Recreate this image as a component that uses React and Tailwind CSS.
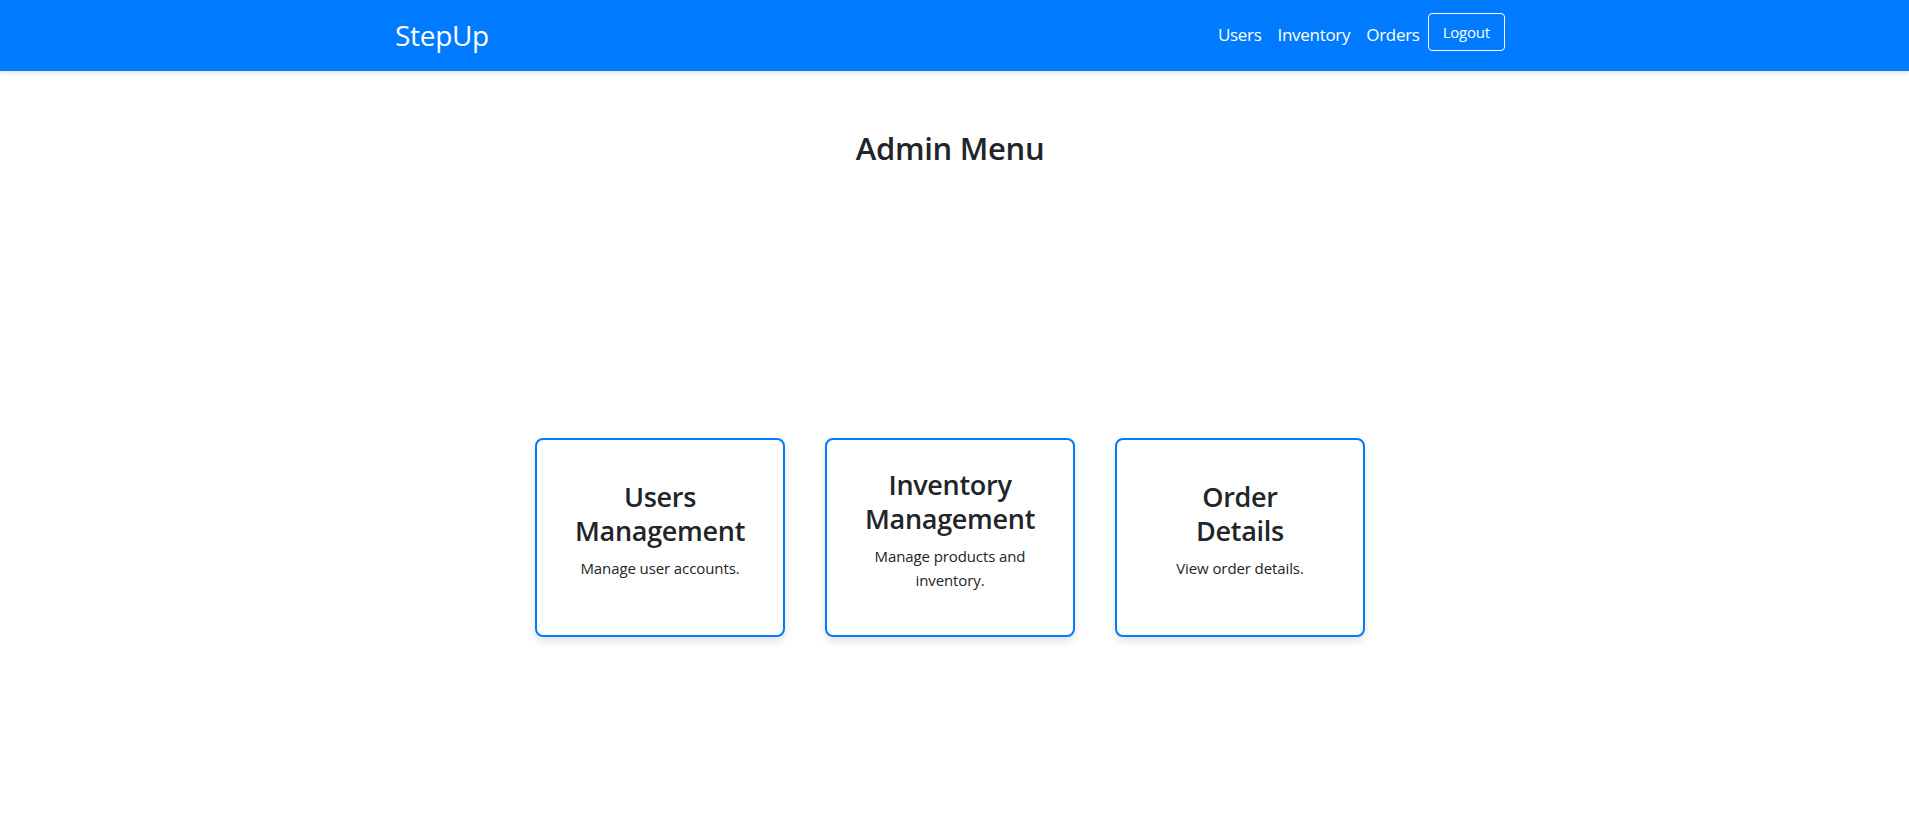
import React from "react";

const cards = [
  { title: ["Users", "Management"], desc: ["Manage user accounts."] },
  { title: ["Inventory", "Management"], desc: ["Manage products and", "inventory."] },
  { title: ["Order", "Details"], desc: ["View order details."] },
];

export default function App() {
  return (
    <div className="min-h-screen bg-white text-[#212529]" style={{ fontFamily: '"Open Sans", "Noto Sans", sans-serif' }}>
      <nav className="w-full bg-[#007bff] shadow-[0_2px_4px_rgba(0,0,0,0.12)]">
        <div className="w-[1900px] h-[71px]">
          <div className="mx-auto w-[1140px] h-full px-[15px] flex items-center justify-between">
            <a className="text-white text-[28px] leading-[36px] tracking-[-0.3px] -mt-[1px]">StepUp</a>
            <div className="flex items-center -mt-[3px]">
              <a className="text-white text-[17px] leading-[26px] px-2 mt-[2px] tracking-[-0.3px]">Users</a>
              <a className="text-white text-[17px] leading-[26px] px-2 mt-[2px] tracking-[-0.3px]">Inventory</a>
              <a className="text-white text-[17px] leading-[26px] px-2 mt-[2px] tracking-[-0.3px]">Orders</a>
              <button className="text-white text-[15px] leading-[24px] px-[14px] py-[6px] border border-white rounded-[4px] -mt-[4px] tracking-[-0.2px]">
                Logout
              </button>
            </div>
          </div>
        </div>
      </nav>
      <div className="w-[1900px]">
        <h2 className="mt-[57px] text-center text-[31px] leading-[40px] font-semibold tracking-[-0.3px]">Admin Menu</h2>
        <div className="mt-[270px] flex justify-center gap-10">
          {cards.map((c, i) => (
            <div
              key={i}
              className="w-[250px] h-[199px] border-2 border-[#007bff] rounded-lg bg-white shadow-[0_4px_8px_rgba(0,0,0,0.12)] flex flex-col items-center justify-center text-center"
            >
              <h3 className="text-[27px] leading-[34px] font-semibold mb-2 tracking-[-0.3px]">
                {c.title.map((t, j) => (
                  <div key={j}>{t}</div>
                ))}
              </h3>
              <p className="text-[15px] leading-[24px] mb-4 tracking-[-0.1px]">
                {c.desc.map((t, j) => (
                  <span key={j} className="block">{t}</span>
                ))}
              </p>
            </div>
          ))}
        </div>
      </div>
    </div>
  );
}
